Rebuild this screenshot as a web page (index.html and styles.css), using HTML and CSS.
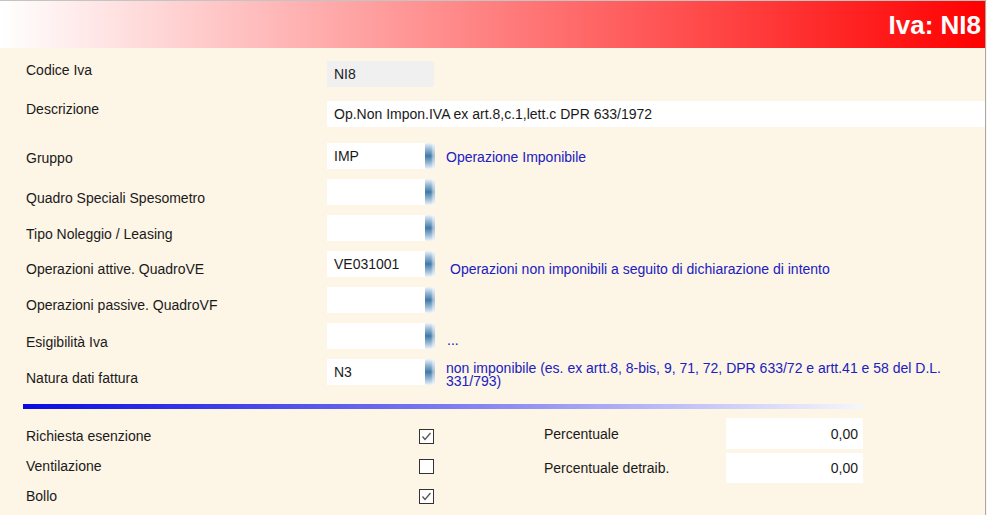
FILE: index.html
```html
<!DOCTYPE html>
<html lang="it">
<head>
<meta charset="UTF-8">
<meta name="viewport" content="width=device-width, initial-scale=1.0">
<link rel="stylesheet" href="styles.css">
<title>Iva: NI8</title>
</head>
<body>
<div class="window">
  <div class="header">
    <span class="title">Iva: NI8</span>
  </div>

  <div class="form">
    <div class="row row-code">
      <div class="label label-top">Codice Iva</div>
      <div class="field field-code">NI8</div>
    </div>
    <div class="row row-desc">
      <div class="label label-first">Descrizione</div>
      <div class="field field-wide">Op.Non Impon.IVA ex art.8,c.1,lett.c DPR 633/1972</div>
    </div>
    <div class="row">
      <div class="label label-mid">Gruppo</div>
      <div class="field field-lookup">IMP</div>
      <div class="lookup-button"></div>
      <div class="lookup-text text-mid">Operazione Imponibile</div>
    </div>
    <div class="row">
      <div class="label">Quadro Speciali Spesometro</div>
      <div class="field field-lookup"></div>
      <div class="lookup-button"></div>
    </div>
    <div class="row">
      <div class="label">Tipo Noleggio / Leasing</div>
      <div class="field field-lookup"></div>
      <div class="lookup-button"></div>
    </div>
    <div class="row">
      <div class="label label-low">Operazioni attive. QuadroVE</div>
      <div class="field field-lookup">VE031001</div>
      <div class="lookup-button"></div>
      <div class="lookup-text text-low">Operazioni non imponibili a seguito di dichiarazione di intento</div>
    </div>
    <div class="row">
      <div class="label label-low">Operazioni passive. QuadroVF</div>
      <div class="field field-lookup"></div>
      <div class="lookup-button"></div>
    </div>
    <div class="row">
      <div class="label">Esigibilità Iva</div>
      <div class="field field-lookup"></div>
      <div class="lookup-button"></div>
      <div class="lookup-text text-dots">...</div>
    </div>
    <div class="row">
      <div class="label">Natura dati fattura</div>
      <div class="field field-lookup">N3</div>
      <div class="lookup-button"></div>
      <div class="lookup-text text-wrap">non imponibile (es. ex artt.8, 8-bis, 9, 71, 72, DPR 633/72 e artt.41 e 58 del D.L. 331/793)</div>
    </div>
  </div>

  <div class="divider"></div>

  <div class="options">
    <div class="checks">
      <div class="check-row">
        <div class="check-label">Richiesta esenzione</div>
        <div class="checkbox">
          <svg width="13" height="13" viewBox="0 0 13 13"><polyline points="2.5,6.5 5,9.5 10.5,3" fill="none" stroke="#555" stroke-width="1.3"/></svg>
        </div>
      </div>
      <div class="check-row">
        <div class="check-label">Ventilazione</div>
        <div class="checkbox"></div>
      </div>
      <div class="check-row">
        <div class="check-label">Bollo</div>
        <div class="checkbox">
          <svg width="13" height="13" viewBox="0 0 13 13"><polyline points="2.5,6.5 5,9.5 10.5,3" fill="none" stroke="#555" stroke-width="1.3"/></svg>
        </div>
      </div>
    </div>
    <div class="percents">
      <div class="percent-row">
        <div class="percent-label">Percentuale</div>
        <div class="number">0,00</div>
      </div>
      <div class="percent-row percent-second">
        <div class="percent-label">Percentuale detraib.</div>
        <div class="number">0,00</div>
      </div>
    </div>
  </div>
</div>
</body>
</html>
```

FILE: styles.css
```css
body {
  margin: 0;
  font-family: "Liberation Sans", Arial, sans-serif;
  font-size: 14px;
  color: #1a1a1a;
  background: #fdf5e6;
}
.window {
  width: 985px;
  height: 515px;
  border-right: 1px solid #a8a8a8;
  background: #fdf5e6;
  overflow: hidden;
}
.header {
  height: 47px;
  border-top: 1px solid #c4c4c4;
  background: linear-gradient(to right, #ffffff, #ff0000);
  display: flex;
  justify-content: flex-end;
  align-items: center;
  padding-right: 4px;
}
.title {
  color: #fff;
  font-weight: bold;
  font-size: 26px;
  line-height: 30px;
}
.form {
  display: flex;
  flex-direction: column;
  gap: 10px;
  padding: 13px 0 0 26px;
}
.row {
  display: flex;
  align-items: flex-start;
  height: 26px;
}
.row-code {
  margin-bottom: 4px;
}
.row-desc {
  margin-bottom: 6px;
}
.label {
  width: 301px;
  flex-shrink: 0;
  line-height: 16px;
  padding-top: 11px;
}
.label-top {
  padding-top: 1px;
}
.label-first {
  padding-top: 0;
}
.label-mid {
  padding-top: 7px;
}
.label-low {
  padding-top: 10px;
}
.field {
  height: 26px;
  line-height: 26px;
  padding-left: 7px;
  box-sizing: border-box;
  background: #fff;
  white-space: nowrap;
}
.field-code {
  width: 107px;
  background: #f0f0f0;
}
.field-wide {
  flex: 1;
  margin-right: -2px;
}
.field-lookup {
  width: 98px;
}
.lookup-button {
  width: 10px;
  height: 26px;
  background: linear-gradient(to bottom, #eef3f8 0%, #8fb3d3 25%, #3f78a8 50%, #8fb3d3 75%, #eef3f8 100%);
  box-shadow: inset -3px 0 2px rgba(255, 255, 255, 0.55);
}
.lookup-text {
  color: #2020c0;
  margin-left: 11px;
  line-height: 16px;
  white-space: nowrap;
}
.text-mid {
  padding-top: 6px;
}
.text-low {
  padding-top: 10px;
  margin-left: 15px;
}
.text-dots {
  padding-top: 9px;
  margin-left: 12px;
}
.text-wrap {
  white-space: normal;
  width: 510px;
  line-height: 13px;
  padding-top: 3px;
}
.divider {
  margin: 19px 0 0 23px;
  width: 840px;
  height: 5px;
  background: linear-gradient(to right, #0a0ae0, #7a7af0 50%, #f6f6fb);
}
.options {
  display: flex;
  align-items: flex-start;
}
.checks {
  padding: 12px 0 0 26px;
}
.check-row {
  display: flex;
  align-items: center;
  height: 30px;
}
.check-label {
  width: 393px;
}
.checkbox {
  width: 13px;
  height: 13px;
  border: 1px solid #333;
  background: #fff;
  display: flex;
}
.percents {
  padding: 9px 0 0 110px;
  display: flex;
  flex-direction: column;
  gap: 4px;
}
.percent-row {
  display: flex;
  align-items: center;
  height: 31px;
}
.percent-second {
  height: 30px;
}
.percent-label {
  width: 182px;
}
.number {
  width: 137px;
  height: 100%;
  box-sizing: border-box;
  background: #fff;
  text-align: right;
  padding-right: 5px;
  display: flex;
  align-items: center;
  justify-content: flex-end;
}
```
